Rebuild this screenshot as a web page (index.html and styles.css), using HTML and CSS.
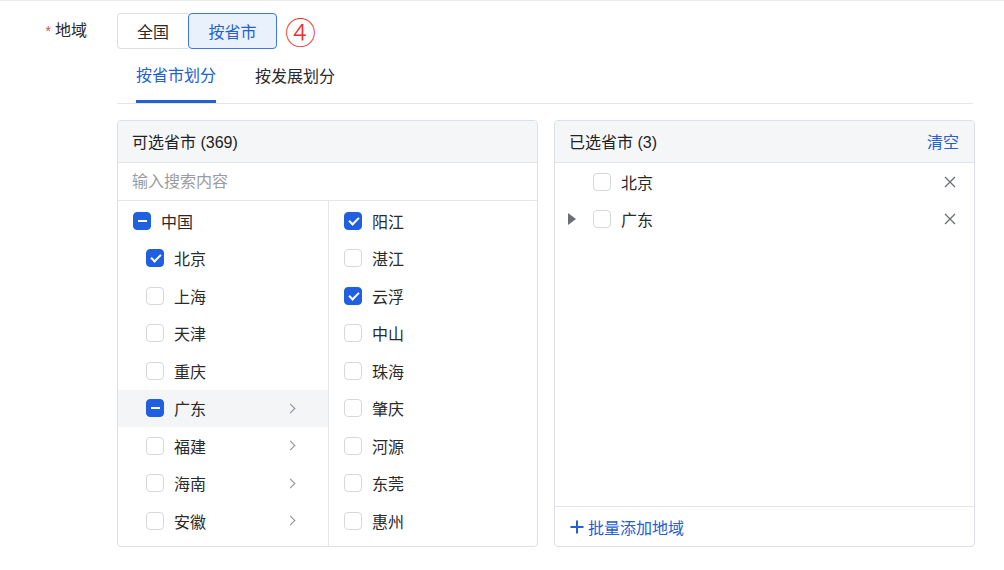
FILE: index.html
```html
<!DOCTYPE html>
<html lang="zh-CN">
<head>
<meta charset="utf-8">
<title>地域</title>
<link rel="stylesheet" href="styles.css">
</head>
<body>
<div class="page">
  <div class="form-row">
    <div class="label"><span class="req">*</span>地域</div>
    <div class="content">
      <div class="top-line">
        <div class="seg">
          <button class="seg-btn">全国</button>
          <button class="seg-btn active">按省市</button>
        </div>
        <span class="marker">④</span>
      </div>
      <div class="tabs">
        <div class="tab active">按省市划分</div>
        <div class="tab">按发展划分</div>
      </div>
      <div class="panels">
        <div class="panel">
          <div class="panel-head">可选省市 (369)</div>
          <div class="search">输入搜索内容</div>
          <div class="cols">
            <div class="col col-left">
              <div class="item"><span class="cb ind"></span><span class="txt">中国</span></div>
              <div class="item child"><span class="cb on"></span><span class="txt">北京</span></div>
              <div class="item child"><span class="cb"></span><span class="txt">上海</span></div>
              <div class="item child"><span class="cb"></span><span class="txt">天津</span></div>
              <div class="item child"><span class="cb"></span><span class="txt">重庆</span></div>
              <div class="item child hl"><span class="cb ind"></span><span class="txt">广东</span><span class="chev"></span></div>
              <div class="item child"><span class="cb"></span><span class="txt">福建</span><span class="chev"></span></div>
              <div class="item child"><span class="cb"></span><span class="txt">海南</span><span class="chev"></span></div>
              <div class="item child"><span class="cb"></span><span class="txt">安徽</span><span class="chev"></span></div>
            </div>
            <div class="col col-right">
              <div class="item"><span class="cb on"></span><span class="txt">阳江</span></div>
              <div class="item"><span class="cb"></span><span class="txt">湛江</span></div>
              <div class="item"><span class="cb on"></span><span class="txt">云浮</span></div>
              <div class="item"><span class="cb"></span><span class="txt">中山</span></div>
              <div class="item"><span class="cb"></span><span class="txt">珠海</span></div>
              <div class="item"><span class="cb"></span><span class="txt">肇庆</span></div>
              <div class="item"><span class="cb"></span><span class="txt">河源</span></div>
              <div class="item"><span class="cb"></span><span class="txt">东莞</span></div>
              <div class="item"><span class="cb"></span><span class="txt">惠州</span></div>
            </div>
          </div>
        </div>
        <div class="panel">
          <div class="panel-head"><span>已选省市 (3)</span><span class="clear">清空</span></div>
          <div class="sel-list">
            <div class="sel-item"><span class="caret-slot"></span><span class="cb"></span><span class="txt">北京</span><svg class="close" width="12" height="12" viewBox="0 0 12 12"><path d="M1 1L11 11M11 1L1 11" stroke="#6b6e74" stroke-width="1.3" fill="none"/></svg></div>
            <div class="sel-item"><span class="caret-slot"><span class="caret"></span></span><span class="cb"></span><span class="txt">广东</span><svg class="close" width="12" height="12" viewBox="0 0 12 12"><path d="M1 1L11 11M11 1L1 11" stroke="#6b6e74" stroke-width="1.3" fill="none"/></svg></div>
          </div>
          <div class="panel-foot"><svg class="plus" width="14" height="14" viewBox="0 0 14 14"><path d="M7 0.5V13.5M0.5 7H13.5" stroke="#2360d0" stroke-width="2" fill="none"/></svg>批量添加地域</div>
        </div>
      </div>
    </div>
  </div>
</div>
</body>
</html>
```
FILE: styles.css
```css
* { box-sizing: border-box; }
html, body { margin: 0; padding: 0; background: #fff; }
body {
  font-family: "Liberation Sans", "Noto Sans CJK SC", sans-serif;
  font-size: 16px;
  color: #2a2a2a;
}
.page {
  width: 1004px;
  height: 570px;
  border-top: 1px solid #e9eaee;
}
.form-row {
  display: flex;
  align-items: flex-start;
  padding-top: 12px;
}
.label {
  width: 87px;
  margin-right: 30px;
  height: 36px;
  line-height: 36px;
  text-align: right;
}
.req {
  color: #e5484d;
  font-size: 14px;
  margin-right: 4px;
}
.content {
  width: 858px;
}
.top-line {
  display: flex;
  align-items: center;
  height: 36px;
}
.seg {
  display: flex;
  height: 36px;
}
.seg-btn {
  font-family: inherit;
  font-size: 16px;
  height: 36px;
  background: #fff;
  border: 1px solid #dcdfe6;
  color: #2a2a2a;
  margin: 0;
  cursor: pointer;
}
.seg-btn:first-child {
  border-radius: 4px 0 0 4px;
  border-right: none;
  width: 71px;
  padding: 0;
}
.seg-btn.active {
  border: 1px solid #3f78d8;
  background: #e8f1fc;
  color: #2360d0;
  border-radius: 4px;
  width: 89px;
  padding: 0;
}
.marker {
  margin-left: 8px;
  font-family: "Noto Sans CJK SC", sans-serif;
  font-size: 31px;
  font-weight: 300;
  line-height: 36px;
  color: #e8302a;
}
.tabs {
  display: flex;
  margin-top: 3px;
  width: 856px;
  height: 52px;
  border-bottom: 1px solid #e4e6eb;
  padding-left: 19px;
  gap: 39px;
}
.tab {
  height: 51px;
  line-height: 50px;
}
.tab.active {
  color: #2360d0;
  border-bottom: 3px solid #2360d0;
  line-height: 48px;
}
.panels {
  display: flex;
  gap: 16px;
  margin-top: 16px;
}
.panel {
  width: 421px;
  height: 427px;
  border: 1px solid #dcdfe6;
  border-radius: 4px;
  display: flex;
  flex-direction: column;
  overflow: hidden;
}
.panel-head {
  height: 42px;
  flex: none;
  background: #f5f6f8;
  border-bottom: 1px solid #e1e3e8;
  display: flex;
  align-items: center;
  justify-content: space-between;
  padding: 0 15px 2px 14px;
  color: #222;
}
.clear { color: #2360d0; }
.search {
  height: 38px;
  flex: none;
  border-bottom: 1px solid #e4e6eb;
  padding-left: 14px;
  line-height: 38px;
  color: #9a9ca1;
}
.cols {
  display: flex;
  flex: 1;
}
.col {
  padding-top: 1px;
}
.col-left {
  width: 211px;
  border-right: 1px solid #e4e6eb;
}
.col-right {
  flex: 1;
}
.item {
  height: 37.5px;
  display: flex;
  align-items: center;
  padding-left: 15px;
}
.item.child { padding-left: 28px; }
.item.hl { background: #f4f5f7; }
.txt { margin-left: 10px; }
.cb {
  width: 18px;
  height: 18px;
  flex: none;
  border: 1px solid #d6d8dd;
  border-radius: 4px;
  background: #fff;
  position: relative;
}
.cb.on, .cb.ind {
  background: #1f5fe0;
  border-color: #1f5fe0;
}
.cb.on::after {
  content: "";
  position: absolute;
  left: 5.5px;
  top: 2px;
  width: 4px;
  height: 8px;
  border: solid #fff;
  border-width: 0 2px 2px 0;
  transform: rotate(45deg);
}
.cb.ind::after {
  content: "";
  position: absolute;
  left: 3.5px;
  top: 7px;
  width: 9px;
  height: 2px;
  background: #fff;
}
.chev {
  margin-left: auto;
  margin-right: 34px;
  width: 7px;
  height: 7px;
  border: solid #8a8d93;
  border-width: 1.5px 1.5px 0 0;
  transform: rotate(45deg);
}
.sel-list {
  flex: 1;
}
.sel-item {
  height: 37.5px;
  display: flex;
  align-items: center;
  padding-left: 13px;
  padding-right: 18px;
}
.caret-slot {
  width: 25px;
  height: 12px;
  flex: none;
  display: flex;
  align-items: center;
}
.caret {
  width: 0;
  height: 0;
  border-top: 6px solid transparent;
  border-bottom: 6px solid transparent;
  border-left: 8px solid #6b6e74;
}
.close {
  margin-left: auto;
  flex: none;
}
.panel-foot {
  height: 40px;
  flex: none;
  border-top: 1px solid #e4e6eb;
  display: flex;
  align-items: center;
  padding-left: 15px;
  color: #2360d0;
}
.plus {
  margin-right: 4px;
  flex: none;
}
```
